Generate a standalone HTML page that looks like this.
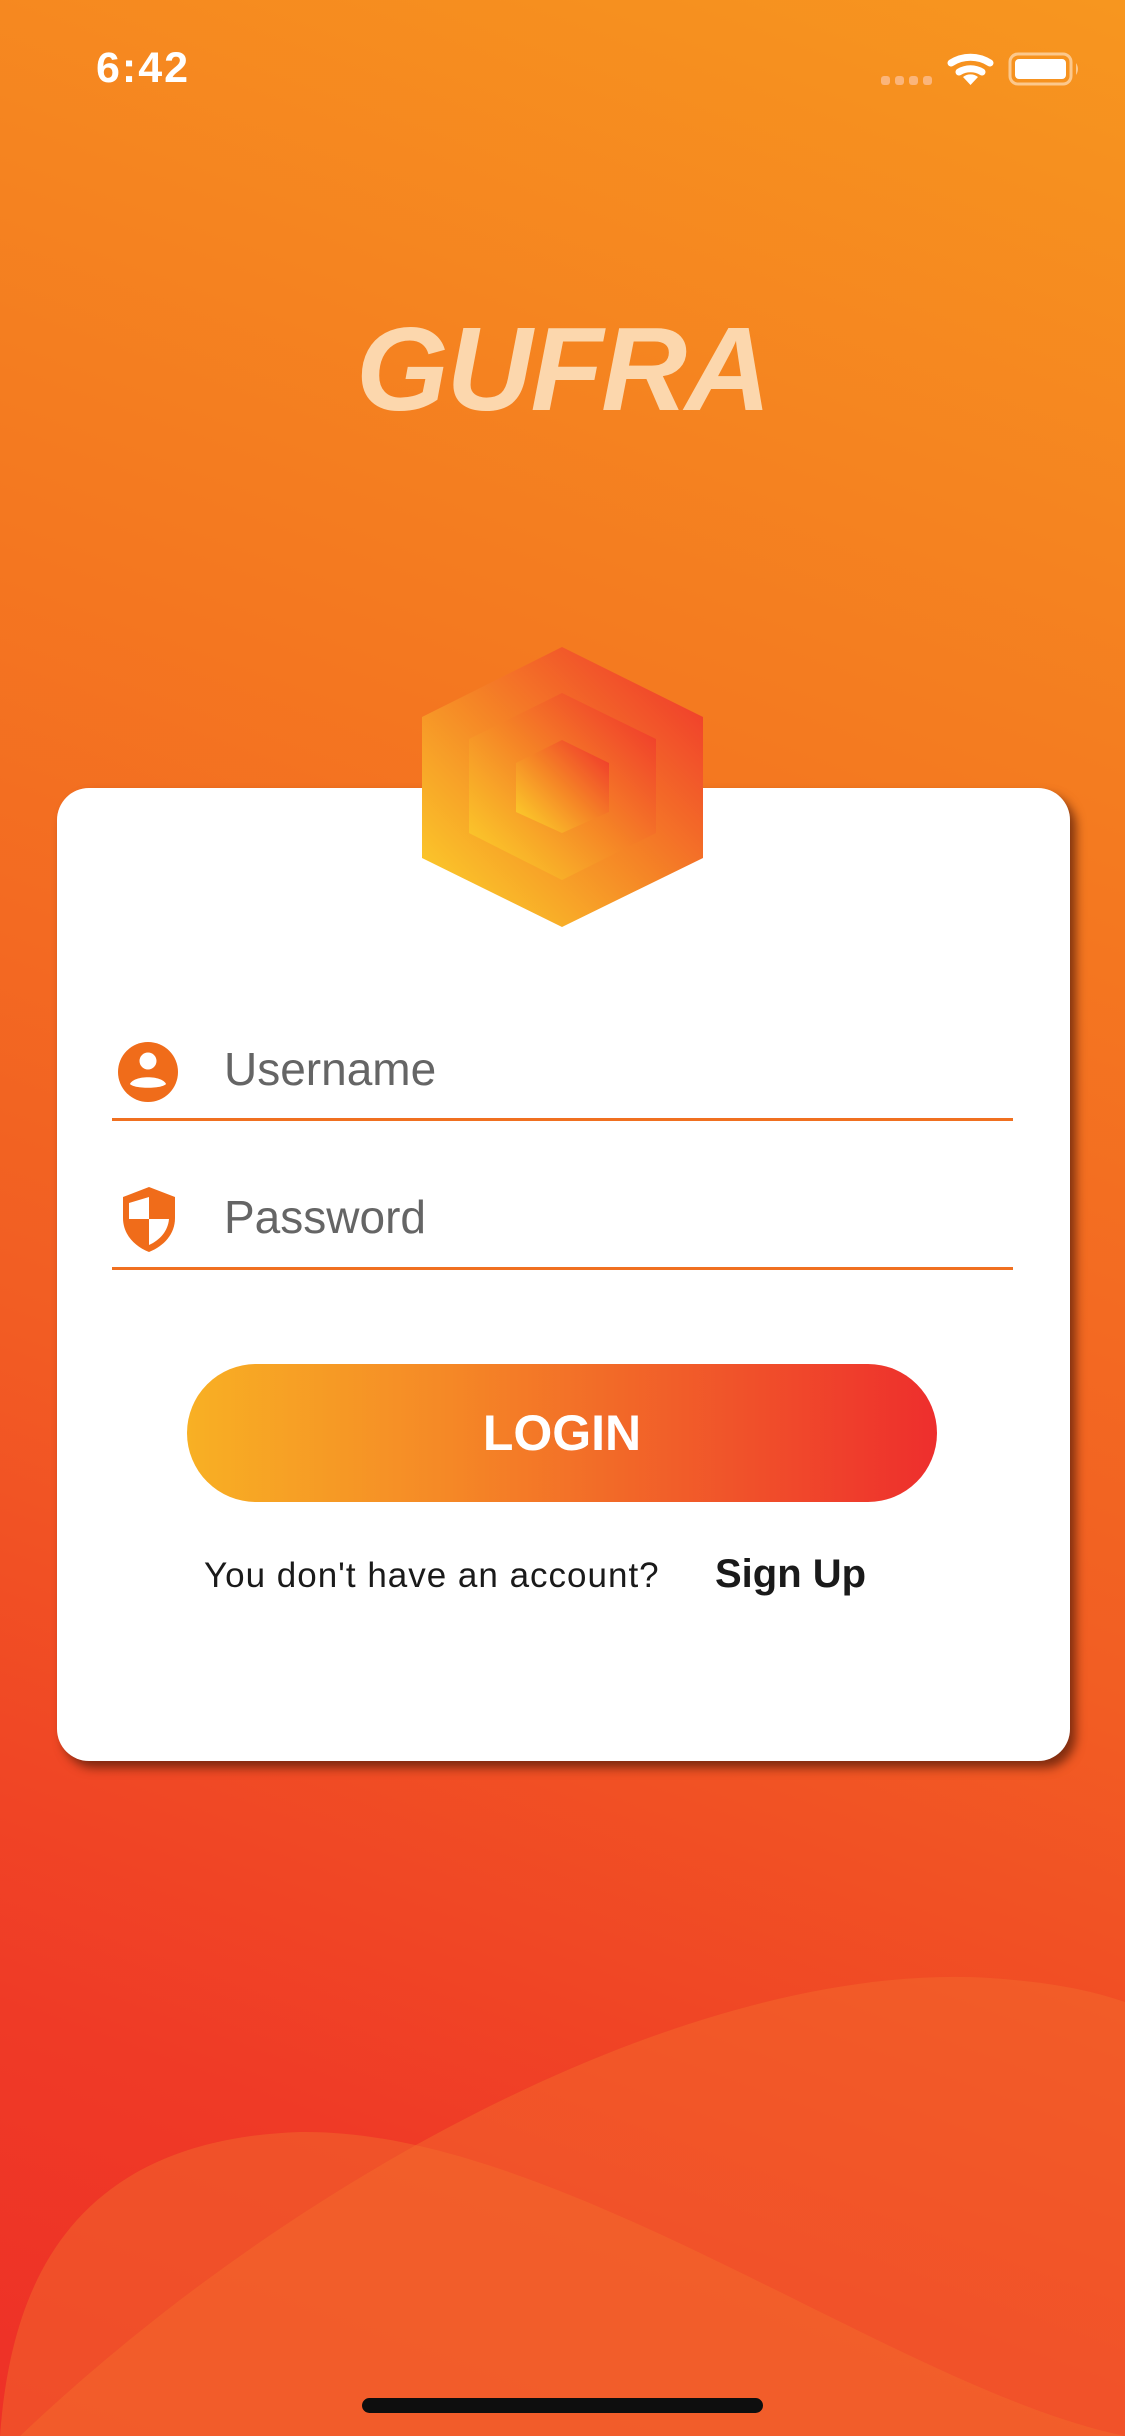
<!DOCTYPE html>
<html><head><meta charset="utf-8"><style>
html,body{margin:0;padding:0}
body{width:1125px;height:2436px;position:relative;overflow:hidden;font-family:"Liberation Sans",sans-serif;
background:linear-gradient(200deg,#f7961f 0%,#f47a20 30%,#f25d23 60%,#ef3a26 85%,#ee3027 100%);}
.abs{position:absolute}
.time{left:96px;top:44px;font-size:43px;font-weight:bold;color:#fff;letter-spacing:2px}
.logo{left:0;width:1125px;top:300px;text-align:center;font-size:119px;font-weight:bold;font-style:italic;color:#fcd7ad;letter-spacing:-2px;line-height:140px}
.card{left:57px;top:788px;width:1013px;height:973px;background:#fff;border-radius:32px;box-shadow:6px 7px 10px rgba(90,30,10,.75)}
.field{font-size:46px;color:#656565;left:224px}
.line{left:112px;width:901px;height:3px;background:#f07020}
.btn{left:187px;top:1364px;width:750px;height:138px;border-radius:69px;background:linear-gradient(90deg,#f8b024 0%,#f58826 35%,#f15e29 65%,#ee2e2d 100%);color:#fff;font-weight:bold;font-size:50px;text-align:center;line-height:138px}
.q{left:204px;top:1556px;font-size:35px;color:#1a1a1a;letter-spacing:1px}
.su{left:715px;top:1552px;font-size:40px;font-weight:bold;color:#1a1a1a}
.home{left:362px;top:2398px;width:401px;height:15px;border-radius:8px;background:#0e0e0e}
</style></head><body>
<svg class="abs" style="left:0;top:0" width="1125" height="2436">
<path d="M0 2436 C10 2300 60 2140 300 2132 C560 2128 900 2390 1125 2436 Z" fill="#f26a2c" opacity=".5"/>
<path d="M20 2436 C300 2170 700 1960 990 1978 C1050 1982 1090 1990 1125 2002 L1125 2436 Z" fill="#f36a2c" opacity=".5"/>
</svg>
<div class="abs time">6:42</div>
<svg class="abs" style="left:860px;top:30px" width="240" height="80">
<g fill="#fbb57a"><rect x="21" y="46" width="9" height="9" rx="3"/><rect x="35" y="46" width="9" height="9" rx="3"/><rect x="49" y="46" width="9" height="9" rx="3"/><rect x="63" y="46" width="9" height="9" rx="3"/></g>
<path d="M91 33 A36 36 0 0 1 130 33" stroke="#fff" stroke-width="7" fill="none" stroke-linecap="round"/>
<path d="M99 42 A22 22 0 0 1 122 42" stroke="#fff" stroke-width="7" fill="none" stroke-linecap="round"/>
<path d="M103 47 L110.5 55 L118 47 A12 12 0 0 0 103 47Z" fill="#fff"/>
<rect x="150" y="24" width="61" height="30" rx="8" fill="none" stroke="#fcc88c" stroke-width="3"/>
<rect x="155" y="29" width="51" height="20" rx="4" fill="#fff"/>
<path d="M216 33 Q220 39 216 45Z" fill="#fcc88c"/>
</svg>
<div class="abs logo">GUFRA</div>
<div class="abs card"></div>
<svg class="abs" style="left:0;top:0" width="1125" height="1000">
<defs><linearGradient id="hg" x1="0" y1="1" x2="1" y2="0"><stop offset="0" stop-color="#fcd82b"/><stop offset=".5" stop-color="#f58426"/><stop offset="1" stop-color="#ef2e2d"/></linearGradient></defs>
<polygon points="562,647 703,717 703,858 562,927 422,858 422,717" fill="url(#hg)"/>
<polygon points="562,693 656,739 656,833 562,880 469,833 469,739" fill="url(#hg)"/>
<polygon points="562,740 609,763 609,812 562,833 516,812 516,763" fill="url(#hg)"/>
</svg>
<svg class="abs" style="left:118px;top:1042px" width="60" height="60" viewBox="0 0 60 60">
<circle cx="30" cy="30" r="30" fill="#f06c1a"/>
<circle cx="30" cy="19" r="8.5" fill="#fff"/>
<path d="M12 42 C16 33 44 33 48 42 C44 47 16 47 12 42Z" fill="#fff"/>
</svg>
<div class="abs field" style="top:1042px">Username</div>
<div class="abs line" style="top:1118px"></div>
<svg class="abs" style="left:120px;top:1186px" width="58" height="68" viewBox="0 0 58 68">
<path d="M29 1 L55 11 L55 32 C55 48 44 60 29 66 C14 60 3 48 3 32 L3 11 Z" fill="#f06c1a"/>
<path d="M29 11 L29 33 L9 33 L9 17 Z" fill="#fff"/>
<path d="M29 33 L49 33 C48 45 40 54 29 59 Z" fill="#fff"/>
</svg>
<div class="abs field" style="top:1190px">Password</div>
<div class="abs line" style="top:1267px"></div>
<div class="abs btn">LOGIN</div>
<div class="abs q">You don't have an account?</div>
<div class="abs su">Sign Up</div>
<div class="abs home"></div>
</body></html>
